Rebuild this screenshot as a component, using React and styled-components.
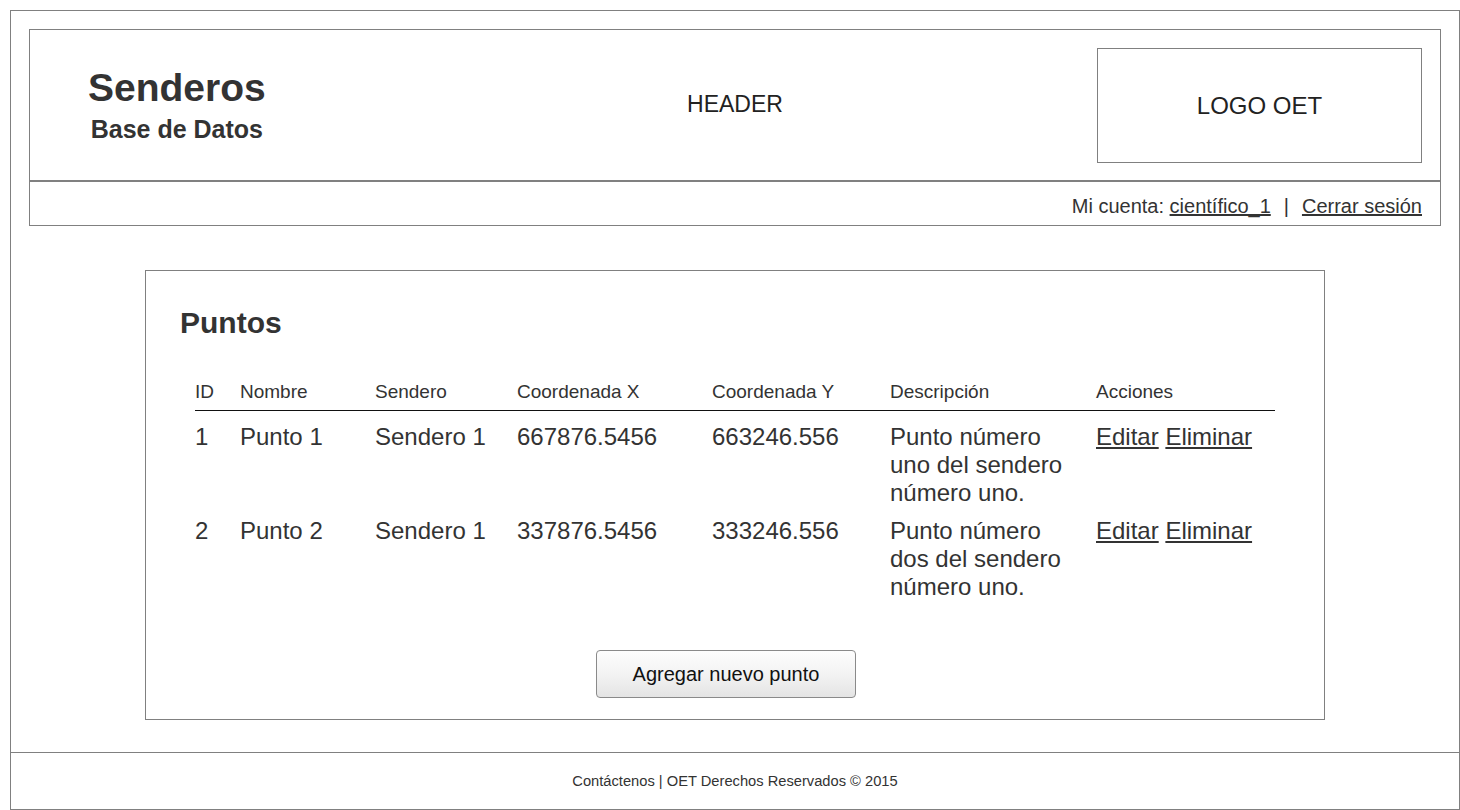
import React from "react";
import styled, { createGlobalStyle } from "styled-components";

const GlobalStyle = createGlobalStyle`
  html, body {
    margin: 0;
    padding: 0;
    background: #ffffff;
  }
  body {
    font-family: "Liberation Sans", Arial, sans-serif;
    color: #333333;
  }
  * { box-sizing: border-box; }
`;

const Frame = styled.div`
  margin: 10px;
  width: 1450px;
  height: 800px;
  border: 1px solid #808080;
  display: flex;
  flex-direction: column;
`;

const Main = styled.main`
  flex: 1;
  padding: 18px 18px 0;
  display: flex;
  flex-direction: column;
`;

const HeaderBox = styled.header`
  border: 1px solid #808080;
  display: flex;
  flex-direction: column;
`;

const HeaderTop = styled.div`
  height: 152px;
  padding: 18px 18px 0;
  display: grid;
  grid-template-columns: 1fr auto 1fr;
  align-items: center;
  align-content: start;
  border-bottom: 2px solid #808080;
`;

const Brand = styled.div`
  justify-self: start;
  margin-left: 40px;
  display: flex;
  flex-direction: column;
  align-items: center;
  font-weight: bold;
  color: #333;
`;

const BrandTitle = styled.div`
  font-size: 39px;
  line-height: 40px;
`;

const BrandSubtitle = styled.div`
  font-size: 25px;
  line-height: 28px;
  margin-top: 7px;
`;

const HeaderLabel = styled.div`
  font-size: 23px;
  line-height: 28px;
  margin-bottom: 4px;
  color: #222;
`;

const LogoBox = styled.div`
  justify-self: end;
  width: 325px;
  height: 115px;
  border: 1px solid #808080;
  display: flex;
  align-items: center;
  justify-content: center;
  font-size: 24px;
  color: #222;
`;

const NavBar = styled.nav`
  height: 43px;
  padding: 13px 18px 0;
  display: flex;
  justify-content: flex-end;
  font-size: 20px;
  line-height: 23px;
  color: #333;
`;

const NavLink = styled.a`
  color: #333;
  text-decoration: underline;
  cursor: pointer;
`;

const Sep = styled.span`
  margin: 0 13px;
`;

const Card = styled.section`
  margin: 44px auto 0;
  width: 1180px;
  height: 450px;
  border: 1px solid #808080;
  padding: 34px 34px 0;
  display: flex;
  flex-direction: column;
`;

const CardTitle = styled.h1`
  margin: 0;
  font-size: 30px;
  line-height: 36px;
  font-weight: bold;
  color: #333;
`;

const columns = "45px 135px 142px 195px 178px 206px 179px";

const Table = styled.div`
  margin: 40px 0 0 15px;
  width: 1080px;
`;

const HeadRow = styled.div`
  display: grid;
  grid-template-columns: ${columns};
  border-bottom: 1px solid #111;
  padding-bottom: 7px;
  font-size: 19px;
  line-height: 22px;
  color: #333;
`;

const Body = styled.div`
  padding-top: 12px;
  display: flex;
  flex-direction: column;
  gap: 10px;
`;

const Row = styled.div`
  display: grid;
  grid-template-columns: ${columns};
  font-size: 24px;
  line-height: 28px;
  color: #333;
`;

const Cell = styled.div`
  max-width: ${(p) => (p.$wrap ? "185px" : "none")};
  white-space: ${(p) => (p.$wrap ? "normal" : "nowrap")};
`;

const ActionLink = styled.a`
  color: #333;
  text-decoration: underline;
  cursor: pointer;
`;

const ButtonRow = styled.div`
  margin-top: 49px;
  display: flex;
  justify-content: center;
  padding-right: 18px;
`;

const Button = styled.button`
  width: 260px;
  height: 48px;
  border: 1px solid #8a8a8a;
  border-radius: 4px;
  background: linear-gradient(to bottom, #fdfdfd 0%, #f3f3f3 50%, #e4e4e4 100%);
  font-family: "Liberation Sans", Arial, sans-serif;
  font-size: 20px;
  color: #111;
  padding: 0;
  cursor: pointer;
`;

const Footer = styled.footer`
  height: 57px;
  border-top: 1px solid #808080;
  padding-bottom: 1px;
  display: flex;
  align-items: center;
  justify-content: center;
  font-size: 14.7px;
  color: #333;
`;

const rows = [
  {
    id: "1",
    name: "Punto 1",
    trail: "Sendero 1",
    x: "667876.5456",
    y: "663246.556",
    desc: "Punto número uno del sendero número uno.",
  },
  {
    id: "2",
    name: "Punto 2",
    trail: "Sendero 1",
    x: "337876.5456",
    y: "333246.556",
    desc: "Punto número dos del sendero número uno.",
  },
];

const headers = [
  "ID",
  "Nombre",
  "Sendero",
  "Coordenada X",
  "Coordenada Y",
  "Descripción",
  "Acciones",
];

export default function App() {
  return (
    <>
      <GlobalStyle />
      <Frame>
        <Main>
          <HeaderBox>
            <HeaderTop>
              <Brand>
                <BrandTitle>Senderos</BrandTitle>
                <BrandSubtitle>Base de Datos</BrandSubtitle>
              </Brand>
              <HeaderLabel>HEADER</HeaderLabel>
              <LogoBox>LOGO OET</LogoBox>
            </HeaderTop>
            <NavBar>
              <span>Mi cuenta:&nbsp;</span>
              <NavLink>científico_1</NavLink>
              <Sep>|</Sep>
              <NavLink>Cerrar sesión</NavLink>
            </NavBar>
          </HeaderBox>

          <Card>
            <CardTitle>Puntos</CardTitle>
            <Table>
              <HeadRow>
                {headers.map((h) => (
                  <Cell key={h}>{h}</Cell>
                ))}
              </HeadRow>
              <Body>
                {rows.map((r) => (
                  <Row key={r.id}>
                    <Cell>{r.id}</Cell>
                    <Cell>{r.name}</Cell>
                    <Cell>{r.trail}</Cell>
                    <Cell>{r.x}</Cell>
                    <Cell>{r.y}</Cell>
                    <Cell $wrap>{r.desc}</Cell>
                    <Cell>
                      <ActionLink>Editar</ActionLink>{" "}
                      <ActionLink>Eliminar</ActionLink>
                    </Cell>
                  </Row>
                ))}
              </Body>
            </Table>
            <ButtonRow>
              <Button type="button">Agregar nuevo punto</Button>
            </ButtonRow>
          </Card>
        </Main>
        <Footer>Contáctenos | OET Derechos Reservados © 2015</Footer>
      </Frame>
    </>
  );
}
